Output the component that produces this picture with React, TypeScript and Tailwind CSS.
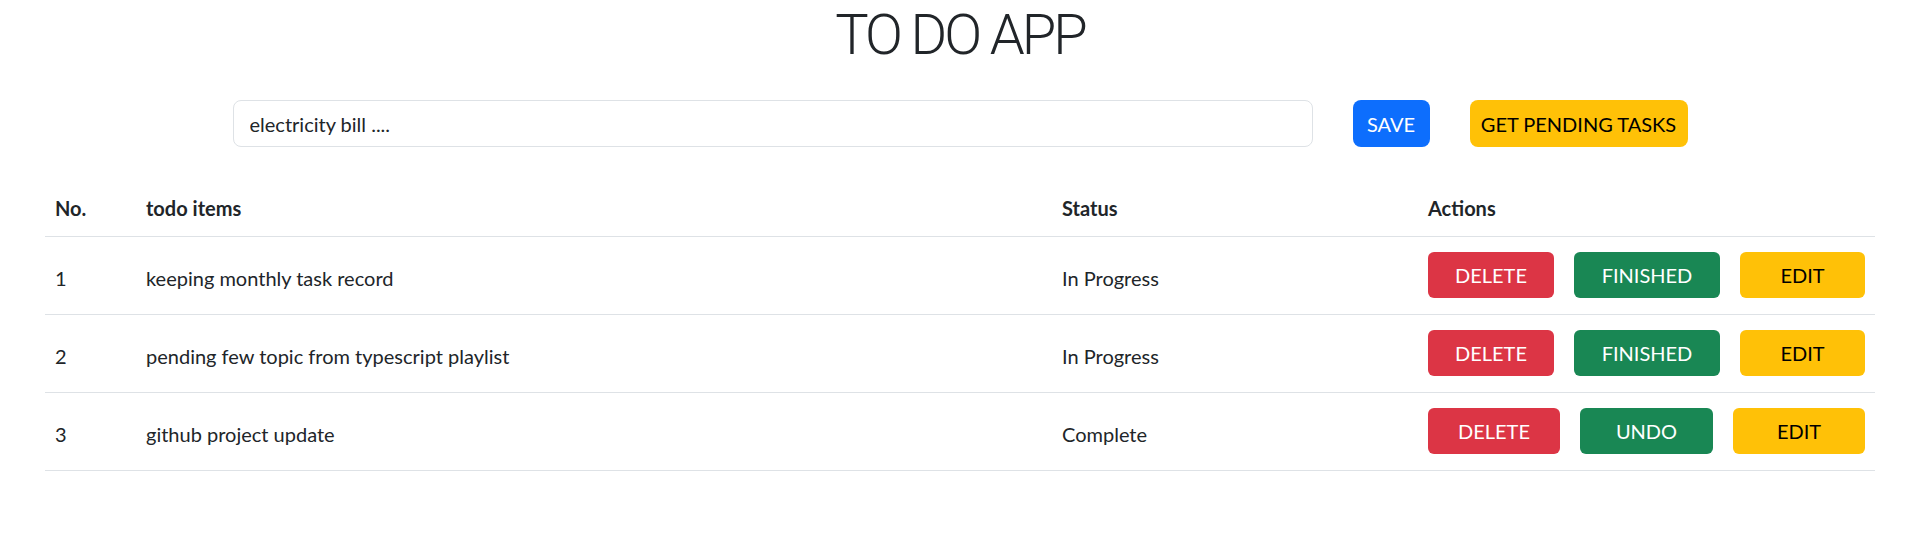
const todos = [
  { id: 1, text: 'keeping monthly task record', status: 'In Progress', done: false },
  { id: 2, text: 'pending few topic from typescript playlist', status: 'In Progress', done: false },
  { id: 3, text: 'github project update', status: 'Complete', done: true },
];

const font = { fontFamily: 'Lato, "Open Sans", sans-serif' };
const titleFont = { fontFamily: 'Roboto, Lato, sans-serif' };

export default function App() {
  return (
    <div className="bg-white text-[#212529] min-h-screen" style={font}>
      <h1 className="text-center text-[56px] font-light leading-[67px] tracking-[-3px] m-0 pt-[2px]" style={titleFont}>
        TO DO APP
      </h1>

      <div className="flex justify-center items-center gap-10 mt-[31px]">
        <input
          className="w-[1080px] h-[47px] px-4 text-[20px] border border-[#dee2e6] rounded-lg text-[#212529] outline-none"
          defaultValue="electricity bill ...."
        />
        <button className="h-[47px] w-[77px] rounded-lg bg-[#0d6efd] text-white text-[20px]">SAVE</button>
        <button className="h-[47px] w-[218px] rounded-lg bg-[#ffc107] text-black text-[20px]">GET PENDING TASKS</button>
      </div>

      <div className="px-[45px] mt-[27px]">
        <table className="w-full table-fixed border-collapse text-[20px]">
          <colgroup>
            <col className="w-[91px]" />
            <col className="w-[916px]" />
            <col className="w-[366px]" />
            <col />
          </colgroup>
          <thead>
            <tr className="border-b border-[#dee2e6] h-[62px]">
              <th className="text-left font-bold px-[10px] pt-[6px]">No.</th>
              <th className="text-left font-bold px-[10px] pt-[6px]">todo items</th>
              <th className="text-left font-bold px-[10px] pt-[6px]">Status</th>
              <th className="text-left font-bold px-[10px] pt-[6px]">Actions</th>
            </tr>
          </thead>
          <tbody>
            {todos.map((t) => (
              <tr key={t.id} className="border-b border-[#dee2e6] h-[78px]">
                <td className="px-[10px] pt-[6px]">{t.id}</td>
                <td className="px-[10px] pt-[6px]">{t.text}</td>
                <td className="px-[10px] pt-[6px]">{t.status}</td>
                <td className="px-[10px]">
                  {t.done ? (
                    <div className="flex gap-5">
                      <button className="h-[46px] w-[132px] rounded-md bg-[#dc3545] text-white">DELETE</button>
                      <button className="h-[46px] w-[133px] rounded-md bg-[#198754] text-white">UNDO</button>
                      <button className="h-[46px] w-[132px] rounded-md bg-[#ffc107] text-black">EDIT</button>
                    </div>
                  ) : (
                    <div className="flex gap-5">
                      <button className="h-[46px] w-[126px] rounded-md bg-[#dc3545] text-white">DELETE</button>
                      <button className="h-[46px] w-[146px] rounded-md bg-[#198754] text-white">FINISHED</button>
                      <button className="h-[46px] w-[125px] rounded-md bg-[#ffc107] text-black">EDIT</button>
                    </div>
                  )}
                </td>
              </tr>
            ))}
          </tbody>
        </table>
      </div>
    </div>
  );
}
